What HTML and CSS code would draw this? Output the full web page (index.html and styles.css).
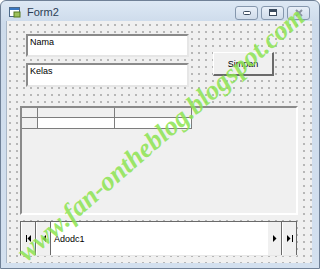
FILE: index.html
```html
<!DOCTYPE html>
<html>
<head>
<link rel="stylesheet" href="styles.css">
</head>
<body>
<div class="window">
  <div class="titlebar">
    <svg class="appicon" width="12" height="11" viewBox="0 0 12 11">
      <rect x="0.5" y="0.5" width="10" height="9" fill="#fff" stroke="#4d6a8a"/>
      <rect x="1" y="1" width="9" height="2" fill="#3a78c2"/>
      <rect x="5" y="5" width="6" height="5" fill="#9ec25a" stroke="#56781e"/>
    </svg>
    <span class="caption">Form2</span>
    <div class="ctrls">
      <span class="ctrl"><svg width="10" height="6" viewBox="0 0 10 6"><rect x="1.5" y="1.5" width="7" height="3" rx="1" fill="#fff" stroke="#3b4b5e"/></svg></span>
      <span class="ctrl"><svg width="10" height="8" viewBox="0 0 10 8"><rect x="1.5" y="0.5" width="7" height="6" fill="#fff" stroke="#3b4b5e"/><rect x="2" y="1" width="6" height="2" fill="#3b4b5e"/></svg></span>
      <span class="ctrl close"><svg width="10" height="8" viewBox="0 0 10 8"><path d="M2 1 L8 7 M8 1 L2 7" stroke="#8a94a0" stroke-width="2"/></svg></span>
    </div>
  </div>

  <div class="client">
    <div class="top">
      <div class="fields">
        <div class="textbox">Nama</div>
        <div class="textbox tall">Kelas</div>
      </div>
      <div class="button">Simpan</div>
    </div>

    <div class="datagrid">
      <table class="cells">
        <tr class="head"><td class="sel"></td><td></td><td></td></tr>
        <tr class="row"><td class="sel"></td><td></td><td></td></tr>
      </table>
    </div>

    <div class="adodc">
      <span class="navbtn"><svg width="6" height="7" viewBox="0 0 6 7"><rect x="0" y="0" width="1" height="7"/><path d="M5 0 L1.5 3.5 L5 7 Z"/></svg></span>
      <span class="navbtn"><svg width="6" height="7" viewBox="0 0 6 7"><path d="M5 0 L1.5 3.5 L5 7 Z"/></svg></span>
      <span class="adcaption">Adodc1</span>
      <span class="navbtn"><svg width="6" height="7" viewBox="0 0 6 7"><path d="M1 0 L4.5 3.5 L1 7 Z"/></svg></span>
      <span class="navbtn"><svg width="6" height="7" viewBox="0 0 6 7"><path d="M0 0 L3.5 3.5 L0 7 Z"/><rect x="5" y="0" width="1" height="7"/></svg></span>
    </div>
  </div>

  <div class="stamp">www.fan-ontheblog.blogspot.com</div>
</div>
</body>
</html>
```

FILE: styles.css
```css
body { margin: 0; background: #fff; }

.window {
  position: relative;
  width: 320px; height: 269px;
  box-sizing: border-box;
  border: 1px solid #6f8096;
  border-radius: 6px 6px 0 0;
  background: linear-gradient(#dde8f4, #cddbeb 22px, #d3e0ef);
  display: flex; flex-direction: column;
  overflow: hidden;
  font-family: "Liberation Sans", Arial, sans-serif;
}

/* title bar */
.titlebar {
  height: 20px;
  display: flex; align-items: center;
  padding-left: 8px;
}
.appicon { margin-right: 6px; margin-top: 2px; }
.caption { font-size: 11px; color: #2c3e55; margin-top: 1px; }
.ctrls { margin-left: auto; margin-right: 9px; display: flex; gap: 3px; margin-top: 3px; }
.ctrl {
  width: 21px; height: 12px;
  border: 1px solid #8597ad; border-radius: 3px;
  background: linear-gradient(#e8eff8, #cfdbe9);
  display: flex; align-items: center; justify-content: center;
}

/* form surface with the design grid */
.client {
  margin: 0 7px 5px 5px;
  flex: 1;
  background-color: #f0f0f0;
  background-image: radial-gradient(circle at 1px 1px, #a2a2a2 0.6px, transparent 1px);
  background-size: 7px 7px;
  background-position: 2px 3px;
  border-left: 1px solid #aab8c8;
  font-size: 9px;
  color: #000;
}

.top { display: flex; margin-top: 13px; padding-left: 19px; }
.fields { display: flex; flex-direction: column; gap: 6px; width: 163px; }
.textbox {
  height: 23px; box-sizing: border-box;
  background: #fff;
  border-top: 2px solid #8a8a8a; border-left: 2px solid #8a8a8a;
  border-right: 2px solid #e6e6e6; border-bottom: 2px solid #e6e6e6;
  padding: 1px 2px;
}
.textbox.tall { height: 24px; }
.button {
  margin-left: 24px; margin-top: 18px;
  width: 61px; height: 24px; box-sizing: border-box;
  background: #f0f0f0;
  border-top: 1px solid #fff; border-left: 1px solid #fff;
  border-right: 2px solid #6a6a6a; border-bottom: 2px solid #6a6a6a;
  display: flex; align-items: center; justify-content: center;
}

/* data grid */
.datagrid {
  margin: 19px 0 0 13px;
  width: 278px; height: 109px; box-sizing: border-box;
  background: #f0f0f0;
  border-top: 2px solid #8a8a8a; border-left: 2px solid #8a8a8a;
  border-right: 2px solid #fff; border-bottom: 2px solid #fff;
}
.cells { border-collapse: collapse; }
.cells td { border: 1px solid #7d7d7d; padding: 0; width: 76px; }
.cells td.sel { width: 15px; background: #f0f0f0; }
.cells tr:first-child td { border-top: none; }
.cells td:first-child { border-left: none; }
.head td { height: 9px; background: #f0f0f0; }
.row td { height: 10px; background: #fff; }

/* ado data control */
.adodc {
  margin: 6px 0 0 13px;
  width: 277px; height: 35px; box-sizing: border-box;
  background: #fff;
  border-top: 1px solid #6a6a6a; border-left: 1px solid #6a6a6a;
  border-bottom: 1px solid #e8e8e8;
  display: flex;
}
.navbtn {
  width: 15px; box-sizing: border-box;
  background: #f0f0f0;
  border-left: 1px solid #fff; border-right: 1px solid #6a6a6a;
  display: flex; align-items: center; justify-content: center;
}
.navbtn svg { fill: #000; }
.adcaption { flex: 1; padding-left: 3px; display: flex; align-items: center; }

/* blog watermark over the screenshot */
.stamp {
  position: absolute;
  left: -50px; top: 118px;
  width: 420px;
  text-align: center;
  font-family: "Liberation Serif", serif;
  font-weight: bold; font-style: italic;
  font-size: 27px;
  color: rgba(140, 228, 80, 0.85);
  transform: rotate(-41deg);
  white-space: nowrap;
}
```
